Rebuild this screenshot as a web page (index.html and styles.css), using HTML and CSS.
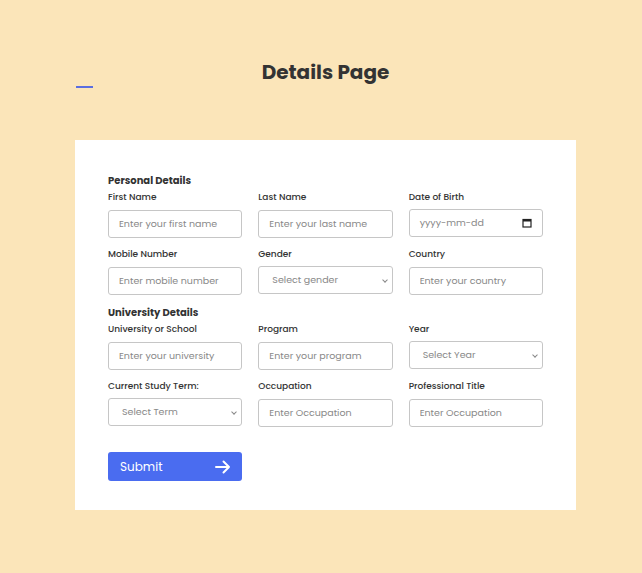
FILE: index.html
```html
<!DOCTYPE html>
<html lang="en">
<head>
  <meta charset="UTF-8">
  <title>Details Page</title>
  <link rel="stylesheet" href="styles.css">
</head>
<body>
  <div class="header">
    <span class="dash"></span>
    <h1>Details Page</h1>
  </div>

  <div class="container">
    <h3>Personal Details</h3>
    <div class="form-row">
      <div class="form-group">
        <label>First Name</label>
        <input type="text" placeholder="Enter your first name">
      </div>
      <div class="form-group">
        <label>Last Name</label>
        <input type="text" placeholder="Enter your last name">
      </div>
      <div class="form-group">
        <label>Date of Birth</label>
        <div class="fake-date">
          <span>yyyy-mm-dd</span>
          <svg width="10" height="10" viewBox="0 0 10 10"><rect x="1" y="1.5" width="8" height="7.5" fill="none" stroke="#222" stroke-width="1.2"/><rect x="1" y="1.5" width="8" height="2" fill="#222"/></svg>
        </div>
      </div>
    </div>

    <div class="form-row">
      <div class="form-group">
        <label>Mobile Number</label>
        <input type="text" placeholder="Enter mobile number">
      </div>
      <div class="form-group">
        <label>Gender</label>
        <div class="select">Select gender</div>
      </div>
      <div class="form-group">
        <label>Country</label>
        <input type="text" placeholder="Enter your country">
      </div>
    </div>

    <h3>University Details</h3>
    <div class="form-row">
      <div class="form-group">
        <label>University or School</label>
        <input type="text" placeholder="Enter your university">
      </div>
      <div class="form-group">
        <label>Program</label>
        <input type="text" placeholder="Enter your program">
      </div>
      <div class="form-group">
        <label>Year</label>
        <div class="select">Select Year</div>
      </div>
    </div>

    <div class="form-row">
      <div class="form-group">
        <label>Current Study Term:</label>
        <div class="select">Select Term</div>
      </div>
      <div class="form-group">
        <label>Occupation</label>
        <input type="text" placeholder="Enter Occupation">
      </div>
      <div class="form-group">
        <label>Professional Title</label>
        <input type="text" placeholder="Enter Occupation">
      </div>
    </div>

    <button class="submit">
      <span>Submit</span>
      <svg width="16" height="14" viewBox="0 0 16 14"><path d="M1 7h13M8.5 1.5L14 7l-5.5 5.5" fill="none" stroke="#fff" stroke-width="2" stroke-linecap="round" stroke-linejoin="round"/></svg>
    </button>
  </div>
</body>
</html>
```

FILE: styles.css
```css
body {
  margin: 0;
  font-family: "Poppins", "DejaVu Sans", sans-serif;
  background-color: #fbe5b9;
  color: #333;
  padding: 58px 66px 0 75px;
}
.header {
  position: relative;
  height: 82px;
}
.dash {
  position: absolute;
  left: 1px;
  top: 28px;
  width: 17px;
  height: 2px;
  background: #5b6ee0;
}
h1 {
  margin: 0;
  text-align: center;
  font-size: 20px;
  font-weight: bold;
  color: #333;
  line-height: 28px;
}
.container {
  background: white;
  width: 435px;
  padding: 33px 33px 29px;
}
h3 {
  margin: 0 0 2px;
  font-size: 10px;
  font-weight: bold;
  line-height: 16px;
}
.form-row {
  display: grid;
  grid-template-columns: repeat(3, 1fr);
  column-gap: 16px;
  margin-bottom: 10px;
}
.form-group label {
  display: block;
  font-size: 9px;
  font-weight: 500;
  line-height: 12px;
  margin-bottom: 6px;
  color: #333;
}
input[type="text"], .fake-date, .select {
  box-sizing: border-box;
  width: 100%;
  height: 28px;
  padding: 0 10px;
  border: 1px solid #c6c6c6;
  border-radius: 3px;
  font-family: inherit;
  font-size: 9.5px;
  color: #888;
  outline: none;
}
input::placeholder {
  color: #888;
}
.fake-date, .select {
  display: flex;
  align-items: center;
  justify-content: space-between;
}
.select {
  padding-left: 13px;
  position: relative;
}
.select::after {
  content: "";
  position: absolute;
  right: 5px;
  top: 11px;
  width: 3px;
  height: 3px;
  border-right: 1px solid #888;
  border-bottom: 1px solid #888;
  transform: rotate(45deg);
}
.submit {
  margin-top: 25px;
  width: 134px;
  height: 29px;
  border: none;
  border-radius: 3px;
  background: #4a6cf0;
  color: white;
  font-family: inherit;
  font-size: 12px;
  display: flex;
  align-items: center;
  justify-content: space-between;
  padding: 0 11px 0 12px;
}
```
